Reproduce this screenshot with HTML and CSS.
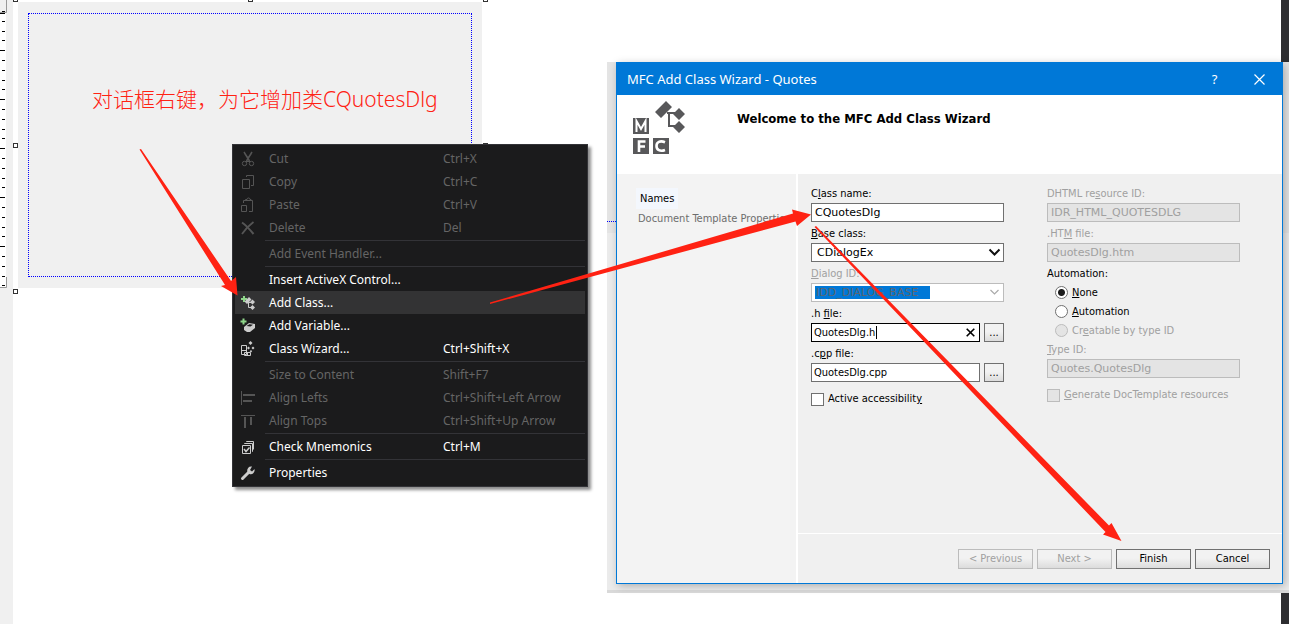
FILE: index.html
```html
<!DOCTYPE html>
<html lang="en">
<head>
<meta charset="utf-8">
<title>MFC Add Class Wizard - Quotes</title>
<link rel="stylesheet" href="styles.css">
</head>
<body>
<main class="desktop">
  <div class="ruler">
    <svg width="8" height="288" viewBox="0 0 8 288" aria-hidden="true">
      <defs>
        <pattern id="ticks" y="1" width="8" height="49" patternUnits="userSpaceOnUse">
          <path d="M0 0h5v1H0zM2 10h3v1H2zM2 20h3v1H2zM2 30h3v1H2zM2 39h3v1H2z"/>
        </pattern>
      </defs>
      <rect width="6" height="288" fill="#fff"/>
      <path d="M0 0h6v12H0z" fill="#f0f0f0"/>
      <rect y="2" width="8" height="284" fill="url(#ticks)"/>
      <path d="M0 13.500h5" stroke="#000"/>
      <path d="M6.500 0V12.500H0M6.500 277V287.500H0" fill="none" stroke="#999"/>
    </svg>
  </div>
  <section class="designer">
    <div class="form-surface">
      <div class="form-guide"></div>
    </div>
  </section>
  <div class="scroll-edge"></div>

  <i class="handle h-nw"></i><i class="handle h-n"></i><i class="handle h-ne"></i>
  <i class="handle h-w"></i><i class="handle h-e"></i><i class="handle h-sw"></i>

  <p class="note" lang="zh">对话框右键，为它增加类CQuotesDlg</p>

  <div class="backdrop"><div class="backdrop-form"></div></div>

  <section class="wizard" aria-label="MFC Add Class Wizard">
    <header class="titlebar">
      <span class="title">MFC Add Class Wizard - Quotes</span>
      <button class="caption" type="button" aria-label="Help">?</button>
      <button class="caption" type="button" aria-label="Close"><svg width="11" height="11" viewBox="0 0 11 11"><path d="M.5.5l10 10M10.500.5l-10 10" fill="none" stroke="#fff" stroke-width="1.200"/></svg></button>
    </header>
    <div class="banner">
      <svg class="logo" width="54" height="54" viewBox="0 0 54 54" aria-hidden="true">
        <g fill="#58585a">
          <path d="M33 0l6 6-11 11-6-6zM46 7l6 6-6 6-6-6zM46 20l6 6-6 6-6-6z"/>
          <path d="M34 11h8v2h-5v11h5v2h-7V13h-1z"/>
          <path d="M0 17h16v16H0zM0 37h16v16H0zM20 37h16v16H20z"/>
        </g>
        <g fill="none" stroke="#fff" stroke-width="2.600">
          <path d="M3.500 31V20L8 28l4.500-8v11" stroke-width="2"/>
          <path d="M6 51V40.500h6.500M6 45.500h6"/>
          <path d="M32 41.200c-5-2-8.500 0-8.500 3.800s3.500 6 8.500 4"/>
        </g>
      </svg>
      <h1>Welcome to the MFC Add Class Wizard</h1>
    </div>
    <div class="wizard-body">
      <nav class="pages">
        <a class="page current" href="#names">Names</a>
        <a class="page" href="#template">Document Template Properties</a>
      </nav>
      <form class="pane" id="names">
        <div class="columns">
          <div class="column">
            <div class="field"><label for="cls">C<u>l</u>ass name:</label><input class="box wide" id="cls" type="text" value="CQuotesDlg"></div>
            <div class="field"><label for="base"><u>B</u>ase class:</label>
              <div class="combo"><select class="box wide" id="base"><option>CDialogEx</option></select>
              <svg width="13" height="9" viewBox="0 0 13 9"><path d="M1.500 1.500l5 5 5-5" fill="none" stroke="#111" stroke-width="2"/></svg></div></div>
            <div class="field disabled"><label for="dlg"><u>D</u>ialog ID:</label>
              <div class="combo"><select class="box wide selected" id="dlg" disabled><option>IDD_DIALOG_BASE</option></select>
              <svg width="13" height="9" viewBox="0 0 13 9"><path d="M2.500 2l4 4 4-4" fill="none" stroke="#aaa" stroke-width="1.200"/></svg></div></div>
            <div class="field"><label for="hfile">.h <u>f</u>ile:</label>
              <div class="file"><div class="clearable"><input class="box focus" id="hfile" type="text" value="QuotesDlg.h"><span class="caret"></span>
              <button class="clear" type="button" aria-label="Clear"><svg width="9" height="9" viewBox="0 0 9 9"><path d="M.7.7l7.600 7.600M8.300.7L.7 8.300" stroke="#000" stroke-width="1.600"/></svg></button></div>
              <button class="browse" type="button">...</button></div></div>
            <div class="field"><label for="cpp">.c<u>p</u>p file:</label>
              <div class="file"><input class="box" id="cpp" type="text" value="QuotesDlg.cpp"><button class="browse" type="button">...</button></div></div>
            <label class="check"><input type="checkbox"><span>Active accessibilit<u>y</u></span></label>
          </div>
          <div class="column">
            <div class="field disabled"><label for="dhtml">DHTML re<u>s</u>ource ID:</label><input class="box wide" id="dhtml" type="text" value="IDR_HTML_QUOTESDLG" disabled></div>
            <div class="field disabled"><label for="htm">.HT<u>M</u> file:</label><input class="box wide" id="htm" type="text" value="QuotesDlg.htm" disabled></div>
            <fieldset class="radios"><legend>Automation:</legend>
              <label><input type="radio" name="auto" checked><span><u>N</u>one</span></label>
              <label><input type="radio" name="auto"><span><u>A</u>utomation</span></label>
              <label class="disabled"><input type="radio" name="auto" disabled><span>Cr<u>e</u>atable by type ID</span></label>
            </fieldset>
            <div class="field disabled"><label for="type"><u>T</u>ype ID:</label><input class="box wide" id="type" type="text" value="Quotes.QuotesDlg" disabled></div>
            <label class="check disabled"><input type="checkbox" disabled><span><u>G</u>enerate DocTemplate resources</span></label>
          </div>
        </div>
        <footer class="actions">
          <button type="button" disabled>&lt; Previous</button>
          <button type="button" disabled>Next &gt;</button>
          <button type="button">Finish</button>
          <button type="button">Cancel</button>
        </footer>
      </form>
    </div>
  </section>

  <div class="menu" role="menu">
    <button class="item" type="button" disabled><svg class="icon" viewBox="0 0 16 16"><path d="M4 1l5.500 9M12 1L6.500 10M5 3l3 4M11 3L8 7" stroke-width="1.500"/><circle cx="4.500" cy="12.500" r="2.200"/><circle cx="11.500" cy="12.500" r="2.200"/><path d="M5.500 10.500h5"/></svg><span>Cut</span><kbd>Ctrl+X</kbd></button>
    <button class="item" type="button" disabled><svg class="icon" viewBox="0 0 16 16"><path d="M2.500 5.500h7v9h-7zM6.500 3V1.500h7v10H11"/></svg><span>Copy</span><kbd>Ctrl+C</kbd></button>
    <button class="item" type="button" disabled><svg class="icon" viewBox="0 0 16 16"><path d="M1.500 8.500h5v6h-5zM3.500 6V3.500h9v11H9M5.500 3.500V2.500h1.500a1.500 1.500 0 0 1 3 0h1v1"/></svg><span>Paste</span><kbd>Ctrl+V</kbd></button>
    <button class="item" type="button" disabled><svg class="icon" viewBox="0 0 16 16"><path d="M2 2.500C6 5 9 8.500 13.500 14" stroke-width="2"/><path d="M13.500 2C8 6 5.500 9 2 14" stroke-width="1.800"/></svg><span>Delete</span><kbd>Del</kbd></button>
    <hr>
    <button class="item" type="button" disabled><i class="icon"></i><span>Add Event Handler...</span></button>
    <hr>
    <button class="item" type="button"><i class="icon"></i><span>Insert ActiveX Control...</span></button>
    <button class="item hot" type="button"><svg class="icon" viewBox="0 0 16 16"><path d="M4 1v6M1 4h6" stroke="#8fd68a" stroke-width="2"/><path d="M9 2l2.500 2.500L7 9 4.500 6.500zM12.500 4.500L15 7l-2.500 2.500L10 7zM12.500 10l2.500 2.500-2.500 2.500-2.500-2.500z" fill="#ccc" stroke="none"/><path d="M8.500 7v5.500h3M8.500 7.500h3" stroke="#ccc"/></svg><span>Add Class...</span></button>
    <button class="item" type="button"><svg class="icon" viewBox="0 0 16 16"><path d="M3.500 0.500v6M.5 3.500h6" stroke="#8fd68a" stroke-width="2"/><path d="M4 9l5-4 6 1v4l-5 4H7L4 12z" fill="#ccc" stroke="none"/><path d="M6.500 8l3-1.800 3.500.6-2.500 1.700z" fill="#1b1b1c" stroke="none"/></svg><span>Add Variable...</span></button>
    <button class="item" type="button"><svg class="icon" viewBox="0 0 16 16"><path d="M1.500 4.500h5v9h-5zM1.500 9.500h5M4.500 11.500h6v3h-6zM7.500 12v2" stroke="#ccc"/><path d="M10.500 0l2 2-2 2-2-2zM13 5.500l1.500 1.500L13 8.500 11.500 7zM8.500 5.500L10 7 8.500 8.500 7 7zM11 9l1.200 1.200L11 11.500 9.700 10.200z" fill="#ccc" stroke="none"/></svg><span>Class Wizard...</span><kbd>Ctrl+Shift+X</kbd></button>
    <hr>
    <button class="item" type="button" disabled><i class="icon"></i><span>Size to Content</span><kbd>Shift+F7</kbd></button>
    <button class="item" type="button" disabled><svg class="icon" viewBox="0 0 16 16"><path d="M1.500 1v14"/><path d="M3 5h12M3 11h9" stroke-width="2"/></svg><span>Align Lefts</span><kbd>Ctrl+Shift+Left Arrow</kbd></button>
    <button class="item" type="button" disabled><svg class="icon" viewBox="0 0 16 16"><path d="M1 2.500h14"/><path d="M5 4v11M11 4v8" stroke-width="2"/></svg><span>Align Tops</span><kbd>Ctrl+Shift+Up Arrow</kbd></button>
    <hr>
    <button class="item" type="button"><svg class="icon" viewBox="0 0 16 16"><path d="M2.500 6.500h8v8h-8zM4.500 5V4.500h8v8H12M6.500 3V2.500h7v8" stroke="#ccc"/><path d="M4 10l2 2.500 3.500-4" stroke="#ccc" stroke-width="1.500"/></svg><span>Check Mnemonics</span><kbd>Ctrl+M</kbd></button>
    <hr>
    <button class="item" type="button"><svg class="icon" viewBox="0 0 16 16"><path d="M2.500 13.500L9 7" stroke="#ccc" stroke-width="3" stroke-linecap="round"/><path d="M12 1.500a4 4 0 0 0-4.500 5.500l2 2A4 4 0 0 0 14.500 4l-2.500 2.500-2-1.500z" fill="#ccc" stroke="none"/></svg><span>Properties</span></button>
  </div>

  <svg class="arrows" width="1289" height="624" viewBox="0 0 1289 624" aria-hidden="true">
    <g fill="#ff2213">
      <path d="M139.500 149.500L141 149 231 281 236 277 237.500 295.500 221 286 225 285z"/>
      <path d="M490 302.500L793 213.500 792 209.500 811 214.500 797 226 795.500 221.500 490 304z"/>
      <path d="M814.500 227L816 226 1109 525.500 1111.500 523 1121.500 541 1103 534.500 1105.500 532z"/>
    </g>
  </svg>
</main>
</body>
</html>
```
FILE: styles.css
```css
* { box-sizing: border-box; }

body {
  margin: 0;
  background: #fff;
  font: 11px/16px "DejaVu Sans Condensed", "DejaVu Sans", sans-serif;
  font-stretch: condensed;
  color: #000;
}

button, input, select { font: inherit; color: inherit; margin: 0; }

.desktop {
  position: relative;
  display: flex;
  min-height: 100vh;
  overflow: hidden;
}

.ruler { width: 13px; background: #f0f0f0; }
.ruler svg { display: block; }
.designer { flex: 1; padding: 2px 5px 0; }
.form-surface { width: 464px; height: 286px; padding: 11px 10px 11px 10px; background: #f0f0f0; }
.form-guide { height: 100%; border: 1px dotted #0000ff; }
.scroll-edge { width: 8px; background: #2d2d30; }

.handle { position: absolute; width: 5px; height: 5px; border: 1px solid #333; background: #fff; }
.h-nw { left: 13px; top: -3px; }
.h-n { left: 248px; top: -3px; }
.h-ne { left: 483px; top: -3px; }
.h-w { left: 13px; top: 143px; }
.h-e { left: 483px; top: 143px; }
.h-sw { left: 13px; top: 289px; }

.note {
  position: absolute;
  left: 92px;
  top: 83px;
  margin: 0;
  color: #ff2213;
  font: 300 21px/32px "Noto Sans", "Noto Sans CJK SC", sans-serif;
  white-space: nowrap;
}

.backdrop { position: absolute; left: 607px; right: 0; top: 62px; bottom: 31px; background: #ebebeb; border-bottom: 3px solid #d9d9d9; }
.backdrop-form { height: 171px; padding-top: 159px; background: #e4e4e4; }
.backdrop-form::after { content: ""; display: block; width: 9px; border-top: 1px dotted #0000ff; }

.wizard {
  position: absolute;
  left: 616px;
  right: 6px;
  top: 62px;
  bottom: 40px;
  display: flex;
  flex-direction: column;
  border: 1px solid #0078d7;
  background: #f0f0f0;
  box-shadow: 2px 2px 8px rgba(0, 0, 0, .25);
}

.titlebar {
  display: flex;
  align-items: center;
  height: 32px;
  padding-left: 10px;
  background: #0078d7;
  color: #fff;
  font: 13px/16px "Noto Sans", sans-serif;
}
.title { flex: 1; }
.caption { width: 45px; height: 32px; padding: 0; border: 0; background: none; color: #fff; }
.caption svg { display: block; margin: auto; }

.banner { display: flex; height: 79px; padding: 6px 16px; background: #fff; }
.banner h1 { margin: 10px 0 0 50px; font-size: 13px; line-height: 16px; font-weight: bold; }

.wizard-body { flex: 1; display: flex; }
.pages {
  width: 181px;
  padding: 14px 0 0 19px;
  border-right: 2px solid #fff;
  background: #f3f3f3;
  display: flex;
  flex-direction: column;
  align-items: flex-start;
  overflow: hidden;
}
.page { color: #6d6d6d; text-decoration: none; white-space: nowrap; padding: 2px; }
.page.current { padding: 3px 4px 2px; background: #f3f7fd; color: #000; }

.pane { flex: 1; display: flex; flex-direction: column; }
.columns { flex: 1; display: flex; gap: 43px; padding: 13px 13px 0; }
.column { width: 193px; }
.field { margin-bottom: 5px; }
.field > label { display: block; height: 16px; line-height: 14px; }
.disabled { color: #a0a0a0; }

.box {
  display: block;
  width: 100%;
  height: 19px;
  padding: 0 2px;
  border: 1px solid #707070;
  border-radius: 0;
  background: #fff;
  outline: none;
}
.wide { font-family: "DejaVu Sans", sans-serif; font-stretch: normal; }
.box.wide { padding: 0 3px; }
.box:disabled { border-color: #bcbcbc; background: #e4e4e4; color: #a0a0a0; opacity: 1; }
.box.focus { border-color: #000; }

.combo { position: relative; }
.combo select { appearance: none; }
.combo select.wide { padding-left: 5px; }
.combo svg { position: absolute; right: 3px; top: 5px; }
.combo select.selected {
  padding-left: 4px;
  background: linear-gradient(#0078d7, #0078d7) 3px 2px / 115px 13px no-repeat #fff;
  color: #5c6670;
}

.file { display: flex; gap: 4px; }
.file > :first-child { flex: 1; min-width: 0; }
.clearable { position: relative; }
.caret { position: absolute; left: 65px; top: 3px; width: 1px; height: 13px; background: #000; }
.clear { position: absolute; right: 5px; top: 5px; padding: 0; border: 0; background: none; }
.clear svg { display: block; }
.browse { width: 20px; height: 19px; padding: 0; line-height: 14px; }

.browse, .actions button {
  border: 1px solid #707070;
  background: linear-gradient(#f2f2f2 45%, #dcdcdc);
}

.check { display: flex; align-items: center; gap: 4px; height: 16px; margin-top: 9px; white-space: nowrap; }
.check input, .radios input {
  appearance: none;
  flex: none;
  width: 13px;
  height: 13px;
  border: 1px solid #707070;
  background: #fff;
}
.radios { margin: 0 0 3px; padding: 0; border: 0; }
.radios legend { padding: 0; height: 16px; line-height: 14px; }
.radios label { display: flex; align-items: center; gap: 4px; height: 19px; padding-left: 8px; }
.radios input { border-radius: 50%; }
.radios input:checked { background: radial-gradient(circle, #1b1b1b 3px, #fff 4px); }
.check input:disabled, .radios input:disabled { border-color: #bcbcbc; background: #e4e4e4; }

.actions { display: flex; justify-content: flex-end; gap: 4px; padding: 15px 12px 14px; border-top: 1px solid #fff; }
.actions button { width: 75px; height: 20px; padding: 0; line-height: 16px; }
.actions button:disabled { border-color: #bcbcbc; color: #a0a0a0; }

.menu {
  position: absolute;
  left: 232px;
  top: 144px;
  width: 356px;
  padding: 2px;
  border: 1px solid #333337;
  background: #1b1b1c;
  box-shadow: 3px 3px 3px rgba(0, 0, 0, .45);
  font: 12px/23px "Noto Sans", sans-serif;
}
.item {
  display: grid;
  grid-template-columns: 34px 174px 1fr;
  align-items: center;
  width: 100%;
  height: 23px;
  padding: 0;
  border: 0;
  background: none;
  color: #fff;
  text-align: left;
}
.item:disabled { color: #656565; }
.item.hot { background: #333334; }
.item kbd { font: inherit; }
.icon { width: 16px; height: 16px; margin-left: 5px; fill: none; stroke: #555; }
.menu hr { height: 1px; margin: 1px 0 1px 30px; border: 0; background: #333337; }

.arrows { position: absolute; left: 0; top: 0; pointer-events: none; }
```
